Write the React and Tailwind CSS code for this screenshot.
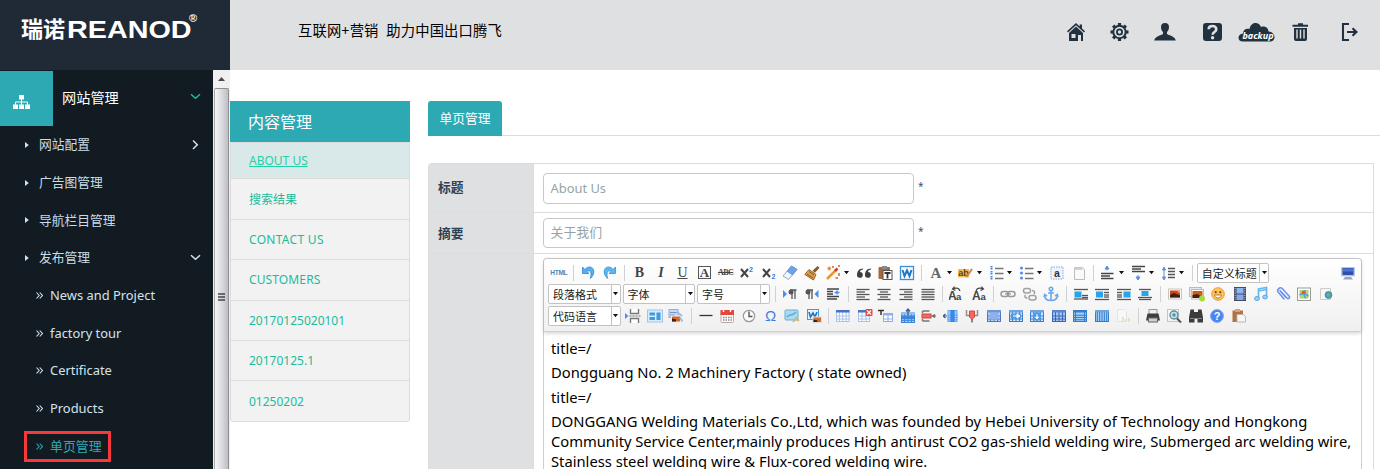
import React from "react";

const cx = (...a) => a.filter(Boolean).join(" ");

const S = ({ children, w = 16, h = 16, className = "" }) => (
  <svg width={w} height={h} viewBox={`0 0 ${w} ${h}`} className={cx("block shrink-0", className)}>
    {children}
  </svg>
);

/* ---------- shared drawing helpers for toolbar icons ---------- */
const Lines = ({ rows, c = "#555", sw = 1.3 }) =>
  rows.map(([x1, x2, y], i) => (
    <path key={i} d={`M${x1} ${y}H${x2}`} stroke={c} strokeWidth={sw} fill="none" />
  ));

const Grid = ({ x = 1, y = 2, w = 14, h = 12, cols = 3, rows = 3, fill = "#cfe3fb", line = "#7da7dd", head = "#4673c4" }) => (
  <g>
    <rect x={x + 0.5} y={y + 0.5} width={w - 1} height={h - 1} fill={fill} stroke={line} />
    {Array.from({ length: cols - 1 }, (_, i) => (
      <path key={"c" + i} d={`M${x + ((i + 1) * w) / cols} ${y}v${h}`} stroke={line} />
    ))}
    {Array.from({ length: rows - 1 }, (_, i) => (
      <path key={"r" + i} d={`M${x} ${y + 3 + ((i + 1) * (h - 3)) / rows}h${w}`} stroke={line} />
    ))}
    {head && <rect x={x} y={y} width={w} height="2.5" fill={head} />}
  </g>
);

const Glyph = ({ children, className }) => (
  <span className={cx("block w-4 text-center leading-4 text-[#444]", className)}>{children}</span>
);

const ICONS = {
  html: <span className="block w-5 text-center font-['Liberation_Sans'] text-[6.5px] leading-4 font-bold tracking-[-0.2px] text-[#4a86b8]">HTML</span>,
  undo: (
    <S>
      <path d="M2.5 2v6.5H9L6.8 6.4C9 4.6 12.5 6 10.3 13.5 15.5 9 14.5 2.5 10 2 7.8 1.800 6 3 5 4.500Z" fill="#5aaef0" stroke="#2f86d8" strokeWidth=".8" />
    </S>
  ),
  redo: (
    <S>
      <path d="M13.500 2v6.500H7l2.200-2.100C7 4.600 3.500 6 5.700 13.500.5 9 1.500 2.500 6 2c2.200-.2 4 1 5 2.500Z" fill="#5ab8f0" stroke="#2f8fd8" strokeWidth=".8" />
    </S>
  ),
  bold: <Glyph className="font-['Liberation_Serif'] text-[14px] font-bold">B</Glyph>,
  italic: <Glyph className="font-['Liberation_Serif'] text-[14px] font-bold italic">I</Glyph>,
  underline: <Glyph className="font-['Liberation_Serif'] text-[14px] underline underline-offset-1">U</Glyph>,
  fontborder: (
    <S>
      <rect x="2.500" y="1.500" width="12" height="12" fill="none" stroke="#555" />
      <text x="8.500" y="12" textAnchor="middle" fontFamily="Liberation Serif" fontSize="13" fontWeight="bold" fill="#444">A</text>
    </S>
  ),
  strike: <Glyph className="font-['Liberation_Serif'] text-[8px] font-bold tracking-[-0.6px] line-through">ABC</Glyph>,
  sup: (
    <S>
      <path d="M2 4l7 8M9 4l-7 8" stroke="#444" strokeWidth="2" />
      <text x="10" y="6.500" fontFamily="Liberation Sans" fontSize="7" fontWeight="bold" fill="#3a76e8">2</text>
    </S>
  ),
  sub: (
    <S>
      <path d="M2 4l7 8M9 4l-7 8" stroke="#444" strokeWidth="2" />
      <text x="10.500" y="14" fontFamily="Liberation Sans" fontSize="7" fontWeight="bold" fill="#3a76e8">2</text>
    </S>
  ),
  eraser: (
    <S>
      <path d="M9.500 1 15 4.500 6.500 14.500 1 11Z" fill="#f2f6fc" stroke="#8fa9cf" />
      <path d="M9.500 1 15 4.500 10.500 10 5 6.200Z" fill="#6fa0e8" stroke="#5d8bd0" strokeWidth=".7" />
    </S>
  ),
  brush: (
    <S>
      <path d="M13.500 1l2 1.800-4.500 5-2.500-2Z" fill="#8a5a2a" />
      <path d="M5 4.500l7 5L9.500 15 .8 9.500Z" fill="#d9a04c" stroke="#9b6522" />
      <path d="M5 6.500l5 3.500M3 9l6 4" stroke="#8a5420" />
    </S>
  ),
  wand: (
    <S>
      <path d="M2 14 11 5" stroke="#f0942e" strokeWidth="2.500" />
      <path d="M10 6l2.500-2.500" stroke="#c5402a" strokeWidth="2.500" />
      <path d="M2.500 3.500h3.500M4.200 1.800v3.500M13 1h2M14 8v3M8 1v2M10.500 13h2.500" stroke="#ef8a3c" strokeWidth="2" />
    </S>
  ),
  quote: (
    <S>
      <path d="M7 3.500C3 3.500 1 6.500 1 9.700a2.900 2.900 0 1 0 2.900-2.700C4.100 5.500 5.200 4.700 7 4.400ZM15 3.500C11 3.500 9 6.500 9 9.700a2.900 2.900 0 1 0 2.900-2.700c.2-1.500 1.300-2.300 3.100-2.600Z" fill="#3e3e3e" />
    </S>
  ),
  pasteText: (
    <S>
      <rect x="1.500" y="2" width="11.500" height="12" rx="1" fill="#a4693c" />
      <rect x="5" y="1" width="5" height="3" fill="#8b8b8b" />
      <rect x="6" y="5.500" width="9" height="9" fill="#fff" stroke="#555" />
      <path d="M7.500 8h6M10.500 8v5.500" stroke="#333" strokeWidth="1.800" />
    </S>
  ),
  pasteWord: (
    <S>
      <rect x="1.500" y="1.500" width="13" height="13" fill="#f4faff" stroke="#3f90d0" strokeWidth="1.300" />
      <path d="M3.500 5l2 6L8 5.500l2.500 5.500 2-6" fill="none" stroke="#2477bd" strokeWidth="2" />
    </S>
  ),
  forecolor: <Glyph className="font-['Liberation_Serif'] text-[15px] font-bold !text-[#666]">A</Glyph>,
  backcolor: (
    <S>
      <rect x="0" y="4" width="11" height="8.500" fill="#f3bf55" />
      <text x="5.500" y="11" textAnchor="middle" fontFamily="Liberation Sans" fontSize="9" fontWeight="bold" fill="#5a3a10">ab</text>
      <path d="M14 4 8.500 12" stroke="#c98368" strokeWidth="2" />
    </S>
  ),
  ol: (
    <S>
      <path d="M2.500 1v3.500M2.500 6v3.500M2.500 11v3.500" stroke="#4a82e0" strokeWidth="2" strokeDasharray="1.500 .6" />
      <Lines rows={[[6, 14.500, 3.500], [6, 14.500, 8.500], [6, 14.500, 13.500]]} c="#777" sw={1.500} />
    </S>
  ),
  ul: (
    <S>
      <g fill="#5b8de6"><circle cx="2.500" cy="3" r="1.600" /><circle cx="2.500" cy="8" r="1.600" /><circle cx="2.500" cy="13" r="1.600" /></g>
      <Lines rows={[[6, 14.500, 3.500], [6, 14.500, 8.500], [6, 14.500, 13.500]]} c="#777" sw={1.500} />
    </S>
  ),
  selectall: (
    <S>
      <rect x="2" y="2" width="12" height="12" fill="#eef4ff" stroke="#7fa9ee" strokeDasharray="1.500 1" />
      <text x="8" y="11.500" textAnchor="middle" fontFamily="Liberation Sans" fontSize="10.500" fontWeight="bold" fill="#333">a</text>
    </S>
  ),
  page: (
    <S>
      <path d="M3.500 2.500h8l2 2v10h-10Z" fill="#fafafa" stroke="#bcbcc4" /><path d="M3.500 2.500h8v2.500h-8z" fill="#d0d0d8" />
    </S>
  ),
  rowTop: (
    <S>
      <path d="M7 5.500V2M5 4l2-3 2 3Z" stroke="#5b8de6" fill="#5b8de6" />
      <Lines rows={[[1, 13.500, 8.500], [1, 10, 11], [1, 13.500, 13.500]]} c="#444" sw={1.500} />
    </S>
  ),
  rowBottom: (
    <S>
      <path d="M7 10v3M5 12l2 3 2-3Z" stroke="#5b8de6" fill="#5b8de6" />
      <Lines rows={[[1, 14, 1.500], [1, 10, 4], [1, 14, 6.500]]} c="#444" sw={1.500} />
    </S>
  ),
  lineHeight: (
    <S>
      <path d="M3 4v9M1.500 5 3 2l1.500 3ZM1.500 12 3 15l1.500-3Z" stroke="#5b8de6" fill="#5b8de6" />
      <Lines rows={[[7, 14, 3.500], [7, 14, 6.500], [7, 14, 9.500], [7, 14, 12.500]]} c="#555" sw={1.500} />
    </S>
  ),
  monitor: (
    <S>
      <rect x="1" y="2" width="14" height="9.500" rx="1" fill="#b9c3e2" /><rect x="2.500" y="3" width="11" height="7" fill="#2f4fae" />
      <path d="M3 3.500h10v3H3z" fill="#4f74cf" /><path d="M5 12h6l2 2.500H3Z" fill="#9aa3bc" />
    </S>
  ),
  ltr: (
    <S><path d="M1 4v8l4-4Z" fill="#4b8cf0" /><path d="M10 3.500v9.500M13 3.500v9.500M8 4h6.500" stroke="#555" strokeWidth="1.300" /><circle cx="9" cy="6" r="2.500" fill="#555" /></S>
  ),
  rtl: (
    <S><path d="M14.500 4v8l-4-4Z" fill="#4b8cf0" /><path d="M5 3.500v9.500M8 3.500v9.500M3 4h6" stroke="#555" strokeWidth="1.300" /><circle cx="4" cy="6" r="2.500" fill="#555" /></S>
  ),
  indent: (
    <S><Lines rows={[[2, 14, 3], [2, 8, 5.500], [2, 8, 8], [2, 14, 10.500], [2, 12, 13]]} c="#444" sw={1.500} /><path d="M9.500 6.500h5M12 4.500v4" stroke="#4b8cf0" strokeWidth="1.500" /></S>
  ),
  left: <S><Lines rows={[[1.500, 14.500, 3.500], [1.500, 10, 6], [1.500, 14.500, 8.500], [1.500, 10, 11], [1.500, 14.500, 13.500]]} /></S>,
  center: <S><Lines rows={[[1.500, 14.500, 3.500], [4, 12, 6], [1.500, 14.500, 8.500], [4, 12, 11], [1.500, 14.500, 13.500]]} /></S>,
  right: <S><Lines rows={[[1.500, 14.500, 3.500], [6, 14.500, 6], [1.500, 14.500, 8.500], [6, 14.500, 11], [1.500, 14.500, 13.500]]} /></S>,
  justify: <S><Lines rows={[[1.500, 14.500, 3.500], [1.500, 14.500, 6], [1.500, 14.500, 8.500], [1.500, 14.500, 11], [1.500, 14.500, 13.500]]} /></S>,
  upper: (
    <S>
      <text x="-1" y="14" fontFamily="Liberation Sans" fontSize="12" fontWeight="bold" fill="#444">A</text>
      <text x="7" y="14" fontFamily="Liberation Sans" fontSize="9.500" fontWeight="bold" fill="#444">a</text>
      <path d="M11 5C10 1.500 6 1.500 4 3M5.500.500 3.500 3 6.500 4.500" fill="none" stroke="#444" strokeWidth="1.200" />
    </S>
  ),
  lower: (
    <S>
      <text x="1" y="14" fontFamily="Liberation Sans" fontSize="12" fontWeight="bold" fill="#444">A</text>
      <text x="9.500" y="14" fontFamily="Liberation Sans" fontSize="9.500" fontWeight="bold" fill="#444">a</text>
      <path d="M5 5c1-3.500 5-3.500 7-2M10.500.500l2 2.500-3 1.500" fill="none" stroke="#444" strokeWidth="1.200" />
    </S>
  ),
  link: (
    <S><g fill="none" stroke="#999" strokeWidth="1.500"><rect x="1" y="5.500" width="7.500" height="5" rx="2.500" /><rect x="7.500" y="5.500" width="7.500" height="5" rx="2.500" /></g><path d="M5 8h6" stroke="#999" strokeWidth="1.300" /></S>
  ),
  unlink: (
    <S><g fill="none" stroke="#a0a0a0" strokeWidth="1.500"><rect x="1.500" y="2.500" width="7" height="4.500" rx="2.200" /><rect x="7" y="9.500" width="7" height="4.500" rx="2.200" /><path d="M10 4.500c3 0 3 2 2 3.500M5.500 12c-3 0-3-2-2-3" /></g></S>
  ),
  anchor: (
    <S><g fill="none" stroke="#6aa7ea" strokeWidth="1.600"><circle cx="8" cy="3" r="1.700" /><path d="M8 5v9.500M5 7h6M1.500 9c0 4 3 5.500 6.500 5.500S14.500 13 14.500 9M1 11l.7-2.500L4 10M15 11l-.7-2.500L12 10" /></g></S>
  ),
  imgNone: <S><Lines rows={[[1, 15, 3.500], [9, 15, 9.500], [9, 15, 11.500], [1, 15, 13]]} /><rect x="1.500" y="5.500" width="7" height="6" fill="#27a4ec" /></S>,
  imgLeft: <S><Lines rows={[[1, 15, 3.500], [10, 15, 6.500], [10, 15, 9], [10, 15, 11], [1, 15, 13.500]]} /><rect x="2" y="5.500" width="7" height="6" fill="#27a4ec" /></S>,
  imgRight: <S><Lines rows={[[1, 15, 3.500], [1, 6, 6.500], [1, 6, 9], [1, 6, 11], [1, 15, 13.500]]} /><rect x="7.500" y="5.500" width="7" height="6" fill="#27a4ec" /></S>,
  imgCenter: <S><Lines rows={[[2, 14, 3.500], [1, 15, 11.500], [2, 14, 13.500]]} /><rect x="4.500" y="5" width="7" height="5" fill="#27a4ec" /></S>,
  image: (
    <S><rect x="1.500" y="3" width="13" height="10" fill="#fff" stroke="#c9c4bd" /><rect x="3" y="4.500" width="10" height="7" fill="#c8471b" /><path d="M3 11.500V9l4-2 6 2.500v2Z" fill="#3f1e10" /><path d="M9 4.500h4v3Z" fill="#f3a13c" /></S>
  ),
  images: (
    <S><rect x=".5" y="1.500" width="12" height="9" fill="#e6e6e6" stroke="#bbb" /><rect x="2.500" y="3.500" width="12" height="9.500" fill="#fff" stroke="#bbb" /><rect x="3.500" y="5" width="10" height="7" fill="#cf5a1c" /><path d="M3.500 12V9l5-1 5 3.500v.5Z" fill="#43210f" /><circle cx="13" cy="12.500" r="3" fill="#a4dc3c" /></S>
  ),
  smile: (
    <S><circle cx="8" cy="8" r="6.300" fill="#fdc65c" stroke="#ee9a3a" /><circle cx="5.700" cy="6.200" r="1.100" fill="#7a4714" /><circle cx="10.300" cy="6.200" r="1.100" fill="#7a4714" /><path d="M4.500 9h7c-.5 4-6.500 4-7 0Z" fill="#fff" stroke="#a95e16" strokeWidth=".8" /></S>
  ),
  film: (
    <S><rect x="2" y="1" width="12" height="14" fill="#454b5e" /><rect x="4.500" y="2" width="7" height="5.500" fill="#91b5f2" /><rect x="4.500" y="8.500" width="7" height="5.500" fill="#84a8ea" /><path d="M3.200 2v12M12.800 2v12" stroke="#cdd3e6" strokeDasharray="1 1.300" /></S>
  ),
  music: (
    <S><path d="M5.500 12V3l8-1.500V10.500" fill="none" stroke="#6ab6ee" strokeWidth="1.700" /><path d="M5.500 5l8-1.500" stroke="#6ab6ee" strokeWidth="1.500" /><ellipse cx="4" cy="12.500" rx="2.500" ry="2" fill="#9cd0f5" stroke="#5aa7e4" /><ellipse cx="12" cy="11" rx="2.400" ry="1.900" fill="#9cd0f5" stroke="#5aa7e4" /></S>
  ),
  clip: (
    <S><path d="M5 4.500 12 12c1.500 1.500 3.500-.2 2-2L7.500 2.700C5 .5 1 3.500 3.500 6.500L9 13M6 6l5 5.500" fill="none" stroke="#6d90e6" strokeWidth="1.500" strokeLinecap="round" /></S>
  ),
  map: (
    <S><rect x="1.500" y="2" width="13" height="12.500" fill="#fff" stroke="#9a9a9a" /><rect x="3.500" y="4" width="9" height="8.500" fill="#a9d77a" /><path d="M3.500 9l4-2 2 5.500M9 4v4l3.500 2" stroke="#5f9fd6" strokeWidth="1.500" fill="none" /><circle cx="7.500" cy="6.500" r="1.800" fill="#e8542f" /></S>
  ),
  gmap: (
    <S><path d="M2.500 2.500h10v11h-10z" fill="#f7f7f7" stroke="#ccc" /><circle cx="10.500" cy="9" r="3.400" fill="#4c9fc9" stroke="#3a7d8f" strokeWidth=".8" /><path d="M9 7l3 .5-1 3.500-2-1Z" fill="#6cb85c" /></S>
  ),
  pagebreak: (
    <S><path d="M0 5v6l3.500-3Z" fill="#4b8cf0" /><path d="M4.500 8H16" stroke="#666" strokeDasharray="2 1" /><path d="M5.500 1v4.500h8V1M5.500 15V10.500h8V15" fill="#fff" stroke="#777" strokeWidth="1.400" /></S>
  ),
  template: (
    <S><rect x=".5" y="2" width="15" height="12" fill="#d9ebfa" stroke="#9cc6ea" /><rect x="2.500" y="4.500" width="5.500" height="3" fill="#3f9be0" /><rect x="2.500" y="9" width="5.500" height="3" fill="#3f9be0" /><rect x="9.500" y="4.500" width="4" height="7.500" fill="#3f9be0" /></S>
  ),
  background: (
    <S><rect x="1" y="1.500" width="9" height="8" fill="#c9daf3" stroke="#94aedb" /><path d="M2 4.500h7M2 7h5" stroke="#6f93cf" /><rect x="3.500" y="8" width="9" height="6" fill="#d0692a" stroke="#eee" /><path d="M4 13.500v-3l4 1v2Z" fill="#392015" /><path d="M9 4l5 4M12 9.500l2.500 4" stroke="#9dbbe8" strokeWidth="2" /></S>
  ),
  hr: <S><path d="M1.500 7.500h13" stroke="#333" strokeWidth="1.300" /></S>,
  date: (
    <S><rect x="2" y="3" width="12.500" height="11.500" rx="1" fill="#fff" stroke="#c3a6a6" /><rect x="1.500" y="2" width="13.500" height="5" fill="#e4483d" /><path d="M4.500 1v3M11.500 1v3" stroke="#fff" strokeWidth="1.300" /><path d="M4 9.500h9M4 12h9" stroke="#888" strokeWidth="1.500" strokeDasharray="1.500 1" /></S>
  ),
  time: (
    <S><circle cx="8" cy="8" r="5.700" fill="#fafafa" stroke="#9a9a9a" strokeWidth="1.200" /><path d="M8 3.500v5h3.500" stroke="#555" strokeWidth="1.400" fill="none" /></S>
  ),
  omega: <Glyph className="font-['Liberation_Sans'] text-[15px] !text-[#3f7be6]">Ω</Glyph>,
  snap: (
    <S><rect x="1" y="2" width="13" height="10" rx="1" fill="#a9dcf0" stroke="#6cadd0" /><path d="M3 9c3-4 5 0 9-5" stroke="#5fb0d8" strokeWidth="1.700" fill="none" /><path d="M9 14l4.500-5M11 9.500l4 3.500" stroke="#d9b46c" strokeWidth="1.800" /></S>
  ),
  wordImage: (
    <S><rect x="1.500" y="1.500" width="11" height="10" fill="#eaf4fd" stroke="#4a97d4" /><path d="M3 4l1.500 5L7 5l2 4L11 4" fill="none" stroke="#2477bd" strokeWidth="1.700" /><rect x="7" y="9" width="8.500" height="5.500" fill="#d4702a" stroke="#ddd" /><path d="M7.500 14v-2.500l4 1V14Z" fill="#3b2013" /></S>
  ),
  table: <S><Grid fill="#fff" line="#a9c2ea" cols={4} w={13.500} /></S>,
  tableDel: <S><Grid fill="#fff" line="#a9c2ea" w={12} /><rect x="8.500" y="1" width="7" height="7" rx="1" fill="#e54a40" /><path d="M10 2.500l4 4M14 2.500l-4 4" stroke="#fff" strokeWidth="1.200" /></S>,
  paraBefore: <S><path d="M0 2.500h6M3 2v5" stroke="#333" strokeWidth="1.500" /><Grid x={5} y={5} w={10} h={9} cols={2} rows={2} fill="#fff" line="#8db1e6" head="#8db1e6" /></S>,
  insRow: <S><Grid y={4} h={11} fill="#9cc8f8" line="#3b86db" head="#8fc0f5" cols={4} /><rect x="1" y="7.500" width="14" height="3.500" fill="#3b86db" /><path d="M8 1v6M6 3.500 8 1l2 2.500" stroke="#4a5d78" strokeWidth="1.300" fill="none" /></S>,
  delRow: <S><path d="M1.500 3h7M1.500 13h7M1.500 3v2M1.500 11v2" stroke="#777" strokeWidth="1.500" /><rect x="1" y="6" width="9" height="4" fill="#f06a60" stroke="#cf4640" /><path d="M10 8h5M14 6.500 11.500 8 14 9.500" fill="none" stroke="#666" strokeWidth="1.200" /></S>,
  insCol: <S><Grid x={4.500} y={2} w={10} h={12} cols={3} rows={4} fill="#a5cefa" line="#6aa5ea" head={null} /><rect x="7.500" y="2" width="4" height="12" fill="#3b86ea" /><path d="M0 8h4M2.500 6 0 8l2.500 2" fill="none" stroke="#3a5d8b" strokeWidth="1.200" /></S>,
  delCol: <S><path d="M2.500 2v5.500h3M13.500 2v5.500h-3" stroke="#a08888" strokeWidth="1.500" fill="none" /><path d="M5.500 3v6L8 11.500 10.500 9V3Z" fill="#f06a60" stroke="#cf4640" /><path d="M8 11v3.500" stroke="#666" strokeWidth="1.500" /></S>,
  merge: <S><Grid cols={4} rows={3} fill="#c0d4f6" line="#4c77c4" head="#6d97da" /><rect x="3.500" y="4.500" width="9" height="7" fill="#8fb0ee" /></S>,
  mergeR: <S><Grid cols={4} rows={3} fill="#cfe6fb" line="#3f7cc8" head="#6fa3dc" /><rect x="3" y="5.500" width="10" height="5" fill="#4b9bea" /><path d="M5 8h5M9 6l3 2-3 2Z" stroke="#fff" fill="#fff" /></S>,
  mergeD: <S><Grid cols={4} rows={3} fill="#cfe6fb" line="#3f7cc8" head="#6fa3dc" /><rect x="4" y="4.500" width="8" height="8" fill="#4b9bea" /><path d="M8 6v3M6.500 9 8 11l1.500-2Z" stroke="#fff" fill="#fff" /></S>,
  splitCells: <S><Grid cols={4} rows={3} fill="#a9c5f4" line="#3a66b8" head="#5a86d0" /></S>,
  splitRows: <S><Grid cols={1} rows={4} fill="#a5d0f6" line="#2f7ccc" head="#3c7ccb" /><path d="M3.500 2v12M12.500 2v12" stroke="#2f7ccc" /></S>,
  splitCols: <S><Grid cols={6} rows={1} fill="#a5d0f6" line="#2f7ccc" head="#6fa3dc" /></S>,
  chart: <S className="opacity-40"><path d="M2.500 1.500h7l2 2v10h-9z" fill="#fff" stroke="#ccc" /><path d="M8 14V9M11 14v-3M14 14v-4" stroke="#cfd080" strokeWidth="2" /></S>,
  print: (
    <S><rect x="4" y="1.500" width="8" height="5" fill="#eee" stroke="#999" /><path d="M2.500 5.500h11l1.500 7H1Z" fill="#3e3e3e" /><rect x="3.500" y="10" width="9" height="4" fill="#cfcfcf" stroke="#666" /></S>
  ),
  preview: (
    <S><rect x="1.500" y="1.500" width="11" height="12" fill="#f5f5f5" stroke="#c5c5c5" /><circle cx="8" cy="7" r="4" fill="#bfe6ec" stroke="#708890" strokeWidth="1.400" /><circle cx="8" cy="7" r="1.700" fill="#3e9dae" /><path d="M11 10.500l4 4" stroke="#555" strokeWidth="2" /></S>
  ),
  search: (
    <S><path d="M2.500 1.500h3.500v2.500h4V1.500h3.500l1.500 8v5h-5.500v-4h-3v4H1v-5Z" fill="#3b3b3b" /><path d="M2 10.500h4M10 10.500h4" stroke="#8a8a8a" /></S>
  ),
  help: (
    <S><circle cx="8" cy="8" r="6.400" fill="#4a84ee" stroke="#7aa3f3" /><text x="8" y="12" textAnchor="middle" fontFamily="Liberation Sans" fontSize="11" fontWeight="bold" fill="#fff">?</text></S>
  ),
  drafts: (
    <S><path d="M1.500 2.500h10.500v11.500H1.500z" fill="#b5713f" /><rect x="4" y="1" width="5" height="3" fill="#d9a27a" /><path d="M6 6.500h6.500l2 2v5.500H6Z" fill="#f6f6f6" stroke="#b9b9b9" /></S>
  ),
};

const Caret = ({ className }) => (
  <svg width="7" height="4" viewBox="0 0 7 4" className={cx("block shrink-0", className)}>
    <path d="M1 0h5L3.500 3.200Z" fill="#111" />
  </svg>
);

const Sep = () => (
  <span className="flex w-2 shrink-0 justify-center"><span className="h-4 w-px bg-[#d0d0d6]" /></span>
);

const Btn = ({ icon }) => <span className="flex w-[21.550px] shrink-0 justify-center">{ICONS[icon]}</span>;
const Split = ({ icon }) => (
  <span className="flex w-[30.300px] shrink-0 items-center pl-[2.500px]">{ICONS[icon]}<Caret className="ml-[1.500px]" /></span>
);
const Combo = ({ label }) => (
  <span className="mr-[2px] flex h-[20px] w-[72.500px] shrink-0 overflow-hidden rounded-[2px] border border-[#c3c3c3] bg-white">
    <span className="flex-1 pl-1 text-[11px] leading-[19px] whitespace-nowrap text-[#222]">{label}</span>
    <span className="flex w-[9px] items-center justify-center border-l border-[#c3c3c3]"><Caret /></span>
  </span>
);

const renderItem = (it, i) => {
  if (it === "|") return <Sep key={i} />;
  if (it.startsWith("=")) return <Combo key={i} label={it.slice(1)} />;
  if (it.endsWith("+")) return <Split key={i} icon={it.slice(0, -1)} />;
  return <Btn key={i} icon={it} />;
};

const ROW1 = "html | undo redo | bold italic underline fontborder strike sup sub eraser brush wand+ quote pasteText pasteWord | forecolor+ backcolor+ ol+ ul+ selectall page | rowTop+ rowBottom+ lineHeight+ | =自定义标题".split(" ");
const ROW2 = "=段落格式 =字体 =字号 | ltr rtl indent | left center right justify | upper lower | link unlink anchor | imgNone imgLeft imgRight imgCenter | image images smile film music clip map gmap".split(" ");
const ROW3 = "=代码语言 pagebreak template background | hr date time omega snap wordImage | table tableDel paraBefore insRow delRow insCol delCol merge mergeR mergeD splitCells splitRows splitCols chart | print preview search help drafts".split(" ");

const Toolbar = () => (
  <div className="h-[73px] shrink-0 rounded-t-[4px] border-b border-[#cfcfcf] bg-gradient-to-b from-white to-[#f0f0f0] pt-[3px] pr-[2px] pl-1 shadow-[0_1px_4px_rgba(0,0,0,0.2)]">
    <div className="flex h-[21px] items-center">
      {ROW1.map(renderItem)}
      <span className="ml-auto flex">
        <Btn icon="monitor" />
      </span>
    </div>
    <div className="flex h-[22px] items-center">{ROW2.map(renderItem)}</div>
    <div className="flex h-[22px] items-center">{ROW3.map(renderItem)}</div>
  </div>
);

/* ---------- header ---------- */
const NAVY = "#22313f";

const Header = () => (
  <header className="flex h-[70px] shrink-0 bg-[#dfe0e2]">
    <div className="flex h-[70px] w-[230px] shrink-0 items-start bg-[#1f2a36] pt-[14px] pl-[21px] text-white">
      <span className="w-[46px] text-[22px] leading-7 font-bold whitespace-nowrap">瑞诺</span>
      <span className="block w-[122px] text-[23px] leading-[30px] font-bold whitespace-nowrap">
        <span className="inline-block origin-left scale-x-[1.250] font-['Liberation_Sans']">REANOD</span>
      </span>
      <span className="-mt-[3px] font-['Liberation_Sans'] text-[11px] leading-[14px] font-bold">®</span>
    </div>
    <div className="flex-1 pt-[20px] pl-[68px] text-[14.300px] leading-[22px] tracking-[0.150px] whitespace-pre text-black">互联网+营销  助力中国出口腾飞</div>
    <div className="flex items-start pt-[23px] pr-[21px]">
      <S w={18} h={18} className="mr-[25px]">
        <path d="M9 0 0 8.300l1 1.100L9 2.200l8 7.200 1-1.100-3-2.800V1.500h-2.300v2Z" fill={NAVY} />
        <path d="M9 3.500 2 10v8h9v-6h3v6h2v-8Z" fill={NAVY} /><rect x="4.500" y="11" width="4" height="4" fill="#dfe0e2" />
      </S>
      <S w={20} h={20} className="mr-[24px]">
        <g stroke={NAVY} fill="none"><circle cx="9.500" cy="9" r="6.200" strokeWidth="2" /><circle cx="9.500" cy="9" r="2.600" strokeWidth="1.800" />
          {[0, 45, 90, 135, 180, 225, 270, 315].map((a) => (
            <path key={a} d="M9.500 2.500V0" strokeWidth="3.200" transform={`rotate(${a} 9.500 9)`} />
          ))}
        </g>
      </S>
      <S w={22} h={18} className="mr-[26px]">
        <path d="M11 0c3 0 4.200 1.800 4 4.500-.2 2.200-1 3.500-2 4.500v2c3.500 1.800 8 2.500 8.800 6.500H.200C1 13.500 5.500 12.800 9 11V9C8 8 7.200 6.700 7 4.500 6.800 1.800 8 0 11 0Z" fill={NAVY} />
      </S>
      <S w={20} h={18} className="mr-[16px]">
        <rect x="1" width="19" height="18" rx="3" fill={NAVY} />
        <path d="M6.700 6.200c0-4.200 7.600-4.200 7.600 0 0 2.800-3.700 2.700-3.700 5.600" stroke="#dfe0e2" strokeWidth="2.600" fill="none" /><circle cx="10.600" cy="14.700" r="1.700" fill="#dfe0e2" />
      </S>
      <S w={37} h={20} className="mr-[17px]">
        <path d="M5 18.500C-1 18.500-1 11 5 10.500c0-3.500 3-5.500 6.500-4.500C13-1.500 21-1.500 23 4c4-1.500 7.500 1 7.500 4.500 7.500.5 8 10 1.500 10Z" fill={NAVY} />
        <text x="20" y="16" textAnchor="middle" textLength="31" lengthAdjust="spacingAndGlyphs" fontFamily="Open Sans, sans-serif" fontSize="9.500" fontWeight="bold" fontStyle="italic" fill="#fff">backup</text>
      </S>
      <S w={17} h={19} className="mr-[32px]">
        <path d="M.5 2.800h15.500M6 1.200h5" stroke={NAVY} strokeWidth="2" /><path d="M2 5h13v11q0 2-2 2H4q-2 0-2-2Z" fill={NAVY} />
        <path d="M5 6.500v9M8.500 6.500v9M12 6.500v9" stroke="#dfe0e2" strokeWidth="1.400" />
      </S>
      <S w={18} h={18}>
        <path d="M8 1H2v16h6M6 9h9M11.500 5.200 15.500 9l-4 3.800" fill="none" stroke={NAVY} strokeWidth="2.100" />
      </S>
    </div>
  </header>
);

/* ---------- left navigation ---------- */
const Chevron = ({ down, color = "#d5e2ee", className }) => (
  <svg width="11" height="11" viewBox="0 0 11 11" className={cx("block", className)}>
    <path d={down ? "M1 3.300 5.500 7.300 10 3.300" : "M3 1.500 7.300 5.700 3 10"} fill="none" stroke={color} strokeWidth="1.500" />
  </svg>
);

const NavItem = ({ label, open, expandable }) => (
  <div className="flex h-[37.700px] items-center pr-[12px] pl-[25px]">
    <svg width="4" height="6" viewBox="0 0 4 6" className="block"><path d="M0 0 3.800 3 0 6Z" fill="#d5e2ee" /></svg>
    <span className="ml-[10px] flex-1 text-[12.750px] whitespace-nowrap text-[#c9dbe8]">{label}</span>
    {expandable && <Chevron down={open} />}
  </div>
);

const SubItem = ({ label, active }) => (
  <div className="flex h-[37.700px] items-center pl-[24px]">
    <div className={cx("flex items-center", active && "h-[31px] w-[87px] border-[3px] border-[#f7393c]")}>
      <svg width="7" height="7" viewBox="0 0 7 7" className={cx("block", active ? "ml-[9px]" : "ml-[12px]")}>
        <path d="M.5.500l2.700 3-2.700 3M3.700.500l2.700 3-2.700 3" fill="none" stroke={active ? "#2ca9b3" : "#d5e2ee"} strokeWidth="1.100" />
      </svg>
      <span className={cx("ml-[7px] text-[12.900px] whitespace-nowrap", active ? "text-[#2ca9b3]" : "text-[#d5e2ee]")}>{label}</span>
    </div>
  </div>
);

const Sidebar = () => (
  <nav className="w-[213px] shrink-0 bg-[#121b21] pt-px">
    <div className="flex h-[55px] items-center">
      <div className="flex h-[55px] w-[53px] items-center justify-center bg-[#2ca9b3] pt-[7px] pr-[10px]">
        <S w={17} h={14}>
          <path d="M6 0h5v4.500H6zM0 9.500h5V14H0zM6 9.500h5V14H6zM12 9.500h5V14h-5z" fill="#fff" />
          <path d="M8.500 4v6M2.500 10V7h12v3" stroke="#fff" fill="none" />
        </S>
      </div>
      <span className="-mt-px ml-[9px] flex-1 text-[14.200px] whitespace-nowrap text-white">网站管理</span>
      <Chevron down color="#1abc9c" className="-mt-[5px] mr-[12px]" />
    </div>
    <NavItem label="网站配置" expandable />
    <NavItem label="广告图管理" />
    <NavItem label="导航栏目管理" />
    <NavItem label="发布管理" expandable open />
    <SubItem label="News and Project" />
    <SubItem label="factory tour" />
    <SubItem label="Certificate" />
    <SubItem label="Products" />
    <SubItem label="单页管理" active />
  </nav>
);

const Scrollbar = () => (
  <div className="flex w-[17px] shrink-0 flex-col bg-[#f0f0f0]">
    <div className="flex h-[18px] shrink-0 items-center justify-center">
      <svg width="7" height="4" viewBox="0 0 7 4"><path d="M0 4 3.500 0 7 4Z" fill="#4a4a4a" /></svg>
    </div>
    <div className="mr-px ml-px flex flex-1 justify-center rounded-t-[2px] border border-b-0 border-[#8f8f8f] border-l-[#a8a8a8] bg-gradient-to-r from-[#f6f6f6] via-[#dcdce0] to-[#bdbdc4] pt-[204px]">
      <S w={7} h={9}><path d="M0 1h7M0 4h7M0 7h7" stroke="#444" strokeWidth="1.300" /></S>
    </div>
  </div>
);

/* ---------- content menu ---------- */
const MENU = [
  ["ABOUT US", "h-[36px]"],
  ["搜索结果", "h-[41px] pt-[2px]"],
  ["CONTACT US", "h-[40px] tracking-[0.300px]"],
  ["CUSTOMERS", "h-[41px] tracking-[0.120px]"],
  ["20170125020101", "h-[40px]"],
  ["20170125.1", "h-[40px]"],
  ["01250202", "h-[40px] pt-[2px]"],
];

const ContentMenu = () => (
  <aside className="mt-[31px] w-[180px] shrink-0 self-start">
    <h2 className="h-[41px] bg-[#2ca9b3] pl-[18px] text-[16px] leading-[42px] text-white">内容管理</h2>
    <ul className="rounded-b-[3px] border border-[#dcdcdc] bg-[#f2f2f2] text-[12px]">
      {MENU.map(([label, h], i) => (
        <li
          key={label}
          className={cx("flex items-center pl-[18px] whitespace-nowrap", h, i === 0 ? "bg-[#d9e9ea] text-[#1fd0a3] underline" : "text-[#1abc9c]", i < MENU.length - 1 && "border-b border-[#dcdcdc]")}
        >
          {label}
        </li>
      ))}
    </ul>
  </aside>
);

/* ---------- form ---------- */
const Label = ({ children, className }) => (
  <div className={cx("w-[105px] shrink-0 border-r border-[#dcdcdc] bg-[#dfe0e2] pl-[9px] text-[12.750px] font-bold text-[#2f4050]", className)}>{children}</div>
);

const Field = ({ value, className }) => (
  <div className={cx("flex w-[371px] items-center rounded-[4px] border border-[#c8c8c8] bg-white pl-[6.500px] text-[12.900px] text-[#95a5a6]", className)}>{value}</div>
);

const Star = () => <span className="mb-[3px] ml-[4px] text-[10px] text-[#34567a]">*</span>;

const Main = () => (
  <main className="ml-[18px] flex flex-1 flex-col pt-[31px]">
    <div className="flex h-[35px] shrink-0 border-b border-[#dcdcdc]">
      <div className="h-[35px] w-[74px] rounded-t-[3px] bg-[#2ca9b3] text-center text-[12.750px] leading-[35px] text-white">单页管理</div>
    </div>
    <div className="mt-[27px] mr-[6px] flex flex-1 flex-col overflow-hidden rounded-tl-[4px] border border-b-0 border-[#dcdcdc]">
      <div className="flex h-[49px] shrink-0 border-b border-[#dcdcdc]">
        <Label className="leading-[47px]">标题</Label>
        <div className="flex items-center pl-[9px]"><Field value="About Us" className="h-[31px] pt-px" /><Star /></div>
      </div>
      <div className="flex h-[41px] shrink-0 border-b border-[#dcdcdc]">
        <Label className="leading-[40px]">摘要</Label>
        <div className="flex items-center pl-[9px]"><Field value="关于我们" className="h-[30px]" /><Star /></div>
      </div>
      <div className="flex min-h-0 flex-1">
        <Label />
        <div className="flex min-w-0 flex-1 pt-[4px] pr-[11px] pl-[9px]">
          <div className="flex flex-1 flex-col rounded-t-[4px] border border-b-0 border-[#cfcfcf] bg-white">
            <Toolbar />
            <div className="pt-[6px] pl-[7px] text-[14.750px] leading-[20px] whitespace-nowrap text-black">
              <p className="mb-[4.300px]">title=/</p>
              <p className="mb-[4.300px]">Dongguang No. 2 Machinery Factory ( state owned)</p>
              <p className="mb-[4.300px]">title=/</p>
              <p className="tracking-[0.020px]">DONGGANG Welding Materials Co.,Ltd, which was founded by Hebei University of Technology and Hongkong</p>
              <p className="tracking-[-0.030px]">Community Service Center,mainly produces High antirust CO2 gas-shield welding wire, Submerged arc welding wire,</p>
              <p>Stainless steel welding wire &amp; Flux-cored welding wire.</p>
            </div>
          </div>
        </div>
      </div>
    </div>
  </main>
);

export default function App() {
  return (
    <div className="flex h-[469px] w-[1380px] flex-col overflow-hidden bg-white font-['Noto_Sans','Noto_Sans_CJK_SC',sans-serif]">
      <Header />
      <div className="flex min-h-0 flex-1">
        <Sidebar />
        <Scrollbar />
        <ContentMenu />
        <Main />
      </div>
    </div>
  );
}
